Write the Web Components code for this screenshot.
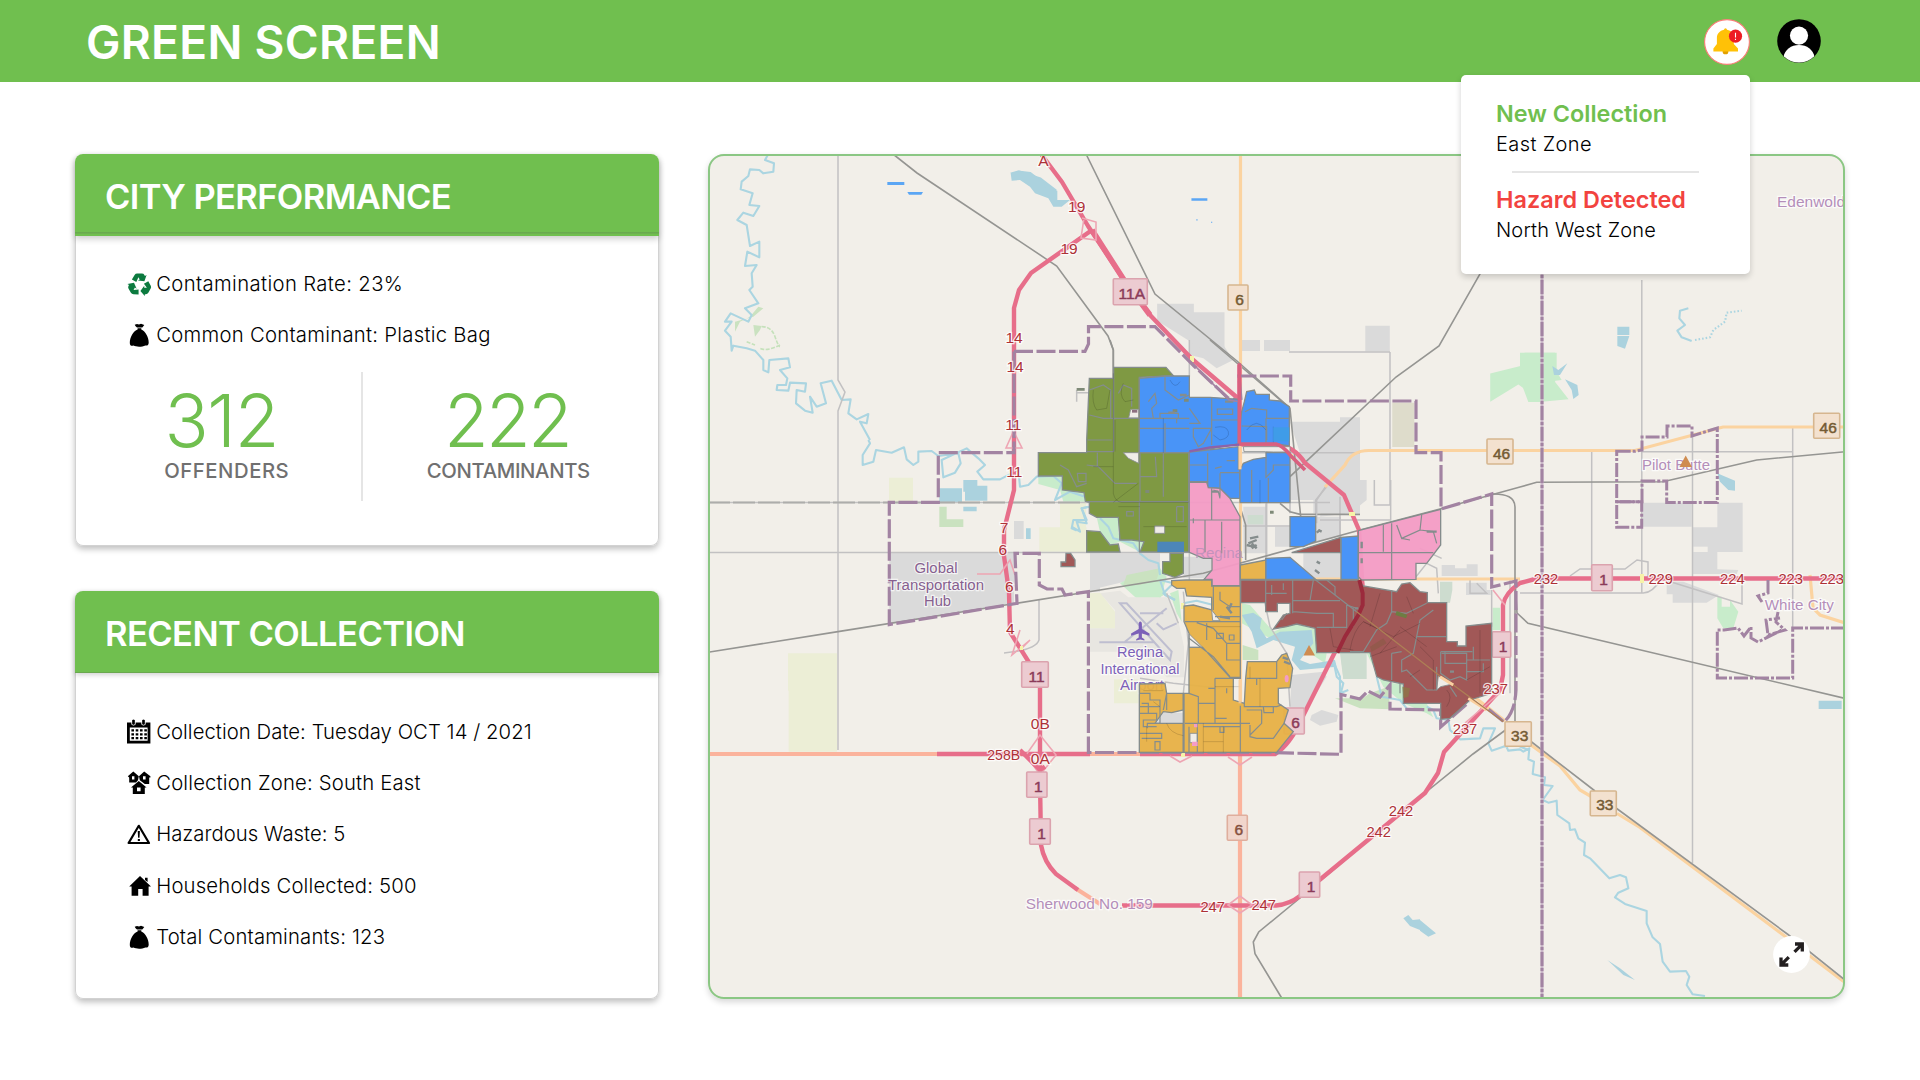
<!DOCTYPE html>
<html lang="en">
<head>
<meta charset="utf-8">
<title>Green Screen</title>
<style>
  html, body { margin: 0; height: 100%; background: #fff; }
  body { font-family: Inter, Roboto, sans-serif; color: #000; overflow: hidden; }
</style>
</head>
<body>
<green-app></green-app>

<script>
const define = (name, html, extra) => {
  const tpl = document.createElement('template');
  tpl.innerHTML = html;
  customElements.define(name, class extends HTMLElement {
    constructor() {
      super();
      this.attachShadow({ mode: 'open' }).append(tpl.content.cloneNode(true));
    }
    connectedCallback() { if (extra) extra.call(this, this.shadowRoot); }
  });
};

/* Single line of text, tracked so that it fills the given measure. */
define('fit-text', `<style>
  :host { display: inline-block; white-space: nowrap; }
  span { display: inline-block; }
</style><span><slot></slot></span>`, function (root) {
  const span = root.querySelector('span');
  const want = parseFloat(this.getAttribute('measure'));
  const n = this.textContent.length;
  if (!want) return;
  span.style.letterSpacing = '0px';
  const ls = (want - span.getBoundingClientRect().width) / n;
  span.style.letterSpacing = ls.toFixed(3) + 'px';
  span.style.marginRight = (-ls).toFixed(3) + 'px';
});

const ICONS = {
  recycle: `<g fill="#0c7a3f">${[0, 120, 240].map(a => `<path transform="rotate(${a} 12.6 13)" d="M4.9 7.4 7.6 3Q8.5 1.600 10.2 1.600H14.900Q16.600 1.600 17.4 3L17.9 3.900 19.6 3 17.4 9.3 10.900 8.6 12.7 7.6 11.4 5.3 9.300 9.900Z"/>`).join('')}</g>`,
  bag: `<path d="M8.6 3.2 7.7 1.8 10 1 12 1.6 14 .8 17.3 2 15.3 4.4H10Z"/><path d="M10.6 5.2H14.3V6.6C18 8 21.7 14 21.7 19.5 21.7 22.6 19.5 22.9 18.4 22.4 15 24 9.5 24 6.4 22.6 4.5 23.2 2.8 22.6 2.8 20 2.8 14 6.6 8 10.6 6.6Z"/>`,
  calendar: `<path fill-rule="evenodd" d="M0 2.5H5V1A1.3 1.3 0 0 1 8 1V2.5H15V1A1.3 1.3 0 0 1 18 1V2.5H23.4V23.4H0ZM2.8 7.6V20.8H20.6V7.6Z"/><path fill="none" stroke="#fff" stroke-width=".8" d="M4.7 1V4.4Q6.5 6 8.3 4.4V1M14.7 1V4.4Q16.5 6 18.3 4.4V1"/><path stroke="#000" stroke-width="2.3" stroke-dasharray="2.6 1.7" d="M4.4 10.4H20M4.4 14.3H20M4.4 18.2H20"/>`,
  zone: `<g fill-rule="evenodd"><path d="M.8 5.200 6.3 .6 11.8 5.2 11 9.300 9 11.6H2.200V6.600ZM5 5.200V8.4H7.4V5.200Z"/><path d="M12 5.200 17.2 .6 23.400 5.200V6.600H22.200V13H17.8L12.8 9.300ZM16 5.200V8.4H18.6V5.200Z"/><path d="M4 16.600 11.8 10.100 19.600 16.600H17.800V23H5.800V16.600ZM10 16.400V20.2H13.600V16.400Z"/></g>`,
  warning: `<path fill="none" stroke="#000" stroke-width="2.2" stroke-linejoin="round" d="M11.8 3.8 22 21H1.6Z"/><path d="M10.7 9H12.9L12.5 15.8H11.1ZM10.8 16.9H12.9V19H10.8Z"/>`,
  house: `<path d="M13 2 24 12.6H21.6V21.8H15.6V15H11.2V21.8H4.6V12.6H2.2L13 2ZM18 3.8H20.6V8L18 6Z"/>`
};
customElements.define('app-icon', class extends HTMLElement {
  constructor() { super(); this.attachShadow({ mode: 'open' }); }
  connectedCallback() {
    this.shadowRoot.innerHTML = `<style>:host{display:block;width:24px;height:24px}svg{display:block;overflow:visible}</style>
      <svg width="24" height="24" viewBox="0 0 24 24">${ICONS[this.getAttribute('name')]}</svg>`;
  }
});

define('info-row', `<style>
  :host { display: flex; align-items: center; height: 51.3px; padding-left: 51px; gap: 5.200px; font-size: 20.3px; font-weight: 300; line-height: 24px; }
</style><slot name="icon"></slot><slot></slot>`);

define('stat-block', `<style>
  :host { display: flex; flex-direction: column; align-items: center; padding-top: 22px; box-sizing: border-box; }
  .n { font-size: 73px; font-weight: 300; line-height: 54px; color: #70bf4f; margin-left: var(--shift, 0); }
  .l { font-size: 20.3px; font-weight: 500; line-height: 20px; margin-top: 13px; color: #707070; }
</style><div class="n"><slot name="value"></slot></div><div class="l"><slot></slot></div>`);

define('stat-pair', `<style>
  :host { display: grid; grid-template-columns: 269px 2px 291px; height: 129px; padding-left: 16px; margin-top: 11.4px; }
  i { background: #e5e5e5; }
</style><slot name="a"></slot><i></i><slot name="b"></slot>`);

define('info-card', `<style>
  :host { display: flex; flex-direction: column; border-radius: 8px; background: #fff; box-shadow: 0 3px 6px rgba(0,0,0,.26); }
  header { height: 82px; box-sizing: border-box; padding: 3px 0 0 30px; display: flex; align-items: center; background: #70bf4f; color: #fff; border-radius: 8px 8px 0 0; font-size: 34.5px; font-weight: 600; position: relative; z-index: 1; }
  :host([ruled]) header { padding-top: 2px; box-shadow: 0 3px 6px rgba(0,0,0,.2); background: linear-gradient(#70bf4f 78px, #67a64e 78px, #6fb551 80px, #70bf4f 80px); }
  :host(:not([ruled])) header { border-bottom: 1px solid #6aa84f; box-shadow: 0 2px 5px rgba(0,0,0,.18); }
  .body { flex: 1; border: 1px solid #d2d2d2; border-top: 0; border-radius: 0 0 8px 8px; padding-top: var(--body-top, 0); }
</style><header><slot name="title"></slot></header><div class="body"><slot></slot></div>`);

define('alert-menu', `<style>
  :host { display: block; box-sizing: border-box; width: 289px; height: 199px; padding: 26px 0 0 35px; background: #fff; border-radius: 5px; box-shadow: 0 3px 6px rgba(0,0,0,.18); }
  h3 { margin: 0; font-size: 23.4px; font-weight: 600; line-height: 26px; }
  p { margin: 5px 0 0; font-size: 20px; font-weight: 300; line-height: 24px; height: 26px; }
  .ok { color: #70bf4f; } .bad { color: #f2433f; }
  hr { width: 187px; height: 2px; border: 0; background: #e5e5e5; margin: 13px 0 14px 16px; }
</style>
<h3 class="ok"><fit-text measure="171">New Collection</fit-text></h3><p><fit-text measure="96">East Zone</fit-text></p>
<hr>
<h3 class="bad"><fit-text measure="190">Hazard Detected</fit-text></h3><p><fit-text measure="160">North West Zone</fit-text></p>`);

define('app-header', `<style>
  :host { display: flex; align-items: center; height: 82px; box-sizing: border-box; padding: 0 99px 0 86px; background: #70bf4f; position: relative; z-index: 5; }
  h1 { margin: 2px auto 0 0; font-size: 46px; font-weight: 600; line-height: 60px; color: #fff; }
  svg { display: block; }
  .bell { margin: 2px 27px 0 0; }
  alert-menu { position: absolute; left: 1461px; top: 75px; }
</style>
<h1><fit-text measure="355">GREEN SCREEN</fit-text></h1>
<svg class="bell" width="46" height="46" viewBox="0 0 46 46"><circle cx="23" cy="23" r="22.4" fill="#fff" stroke="#fb7d78" stroke-width="1.1"/>
<circle cx="21.5" cy="32.4" r="2.9" fill="#e2a000"/>
<path fill="#ffc107" d="M20 10.8Q20.2 9.4 21.5 9.2 22.8 9.4 23 10.8C27.4 11.6 29.8 15 29.8 19V25L34 29.4V32.6H9.4V29.4L12.9 25V19C12.9 15 15.6 11.6 20 10.8Z"/>
<circle cx="31.5" cy="17.2" r="6.6" fill="#ed1c24"/><path stroke="#fff" stroke-width="1.1" d="M31.5 13.8V18.6M31.5 19.8V21"/></svg>
<svg width="44" height="44" viewBox="0 0 44 44"><defs><clipPath id="c"><circle cx="22" cy="22" r="21.6"/></clipPath></defs><circle cx="22" cy="22" r="21.8" fill="#000"/><g clip-path="url(#c)" fill="#fff"><circle cx="22" cy="16.6" r="9.1"/><path d="M6.4 38C8 30.5 14 26 22 26S36 30.5 37.6 38Q31 44 22 44T6.4 38Z"/></g></svg>
<alert-menu></alert-menu>`);

/* ---- map data ---- */
const at = (x, y, body) => `<g transform="translate(${x} ${y}) scale(.33333)">${body}</g>`;
const wide = body => `<g transform="scale(1.2245)">${body}</g>`;
const P = (cls, ...ds) => ds.map(d => `<path class="${cls}" d="${d}"/>`).join('');

const land =
  at(700, 440, P('built', 'M568 338H942V490L568 553Z', 'M942 243H971V297H942ZM1170 338H1200V455H1170Z') + P('farm', 'M567 113H639V187H567ZM1018 262H1160V335H1018ZM264 640H411V935H266V752H264Z') +
    P('wood', 'M718 200H740V238H790V261H718Z') + P('water', 'M718 145H786V187H718ZM790 120H832V137H862V182H795V155H790ZM790 200H830V214H790ZM978 265H992V297H978Z') + P('park', 'M1015 108H1085V150L1150 155 1160 185H1090L1080 150 1015 132Z')) +
  at(1060, 340, P('built', 'M390 0H480L520 60 470 85 430 55 390 45ZM545 0H600V33H545ZM612 0H690V33H612ZM690 245H840V232H900V520H760V480H690V340H720ZM550 500H618V640H550ZM645 560H690V620H645ZM767 530H840V590L767 605ZM90 640H300V700L90 750ZM370 650H455V690L430 715H370ZM730 640H843V718H767L730 690Z') +
    P('wood2', 'M563 525H610V553H563Z') + P('farm', 'M0 487H78V636H0Z') + P('park', 'M110 532H175V580L200 597 252 605 240 636 180 605 150 615 120 575ZM180 730 235 700 300 685 320 710 300 780H235Z')) +
  at(1060, 560, P('airport', 'M90 275V205H165V150L120 100 180 92 205 112H320L350 160 372 260V352H320L300 330 240 275Z') + P('farm', 'M90 100 120 98 165 155V205H90ZM162 358H235V430H162Z') +
    P('park', 'M235 100 240 78 300 75 320 100 300 112ZM330 100 355 90 365 185 350 160Z') + P('wood', 'M190 75 200 45 300 25 290 60 240 75ZM548 255 595 270V300H548Z') +
    P('park', 'M545 130 570 135 640 215 700 190 765 208 775 280 800 280 795 310 750 280 690 235 630 235 545 190Z') +
    P('water', 'M545 165 580 158 605 175 600 205 620 235 660 215 755 210 760 250 720 300 750 312 825 300 830 320 720 330 695 300 705 260 640 240 590 265 575 215Z') +
    P('built', 'M695 345 790 335 800 350 735 455 690 445ZM755 465 785 450 835 465 830 485 780 497 750 480ZM310 458H370V490H290Z') + P('wood2', 'M840 280H900V357H850Z')) +
  at(1220, 480, P('built', 'M330 0H440V60L390 100 300 110 310 50ZM210 0H268V60H210ZM665 255H705V265H740V253H773V288H665ZM738 308H800V330H812V345H738ZM300 230H362V290H260Z') + P('wood2', 'M660 305H697V330L690 368H660ZM362 520H440V597H370Z') +
    P('park', 'M818 383H840V450H818ZM440 520 455 520 470 590 520 610 545 612 560 660 620 670 640 712 620 700 550 670 490 620Z') + P('wood', 'M345 655 400 655 420 660 450 640 505 620 510 688 420 685Z')) +
  wide(P('built', 'M945 248H975V255H1000V287H985L945 262ZM1115 266H1135V287H1115Z') + P('farmd', 'M1137 329H1155V365H1137Z') + P('park', 'M1217 305 1245 298V288H1270V312L1281 326 1259 328 1240 314 1217 328Z') + P('water', 'M825 141 832 139 850 145 863 155 860 160 850 158Z')) +
  at(1520, 280, P('park', 'M0 218H110V275L125 300 60 308V366H25L0 300ZM592 950 605 950V980H630V960L655 995 640 1045H610L592 1015Z') + P('water', 'M292 140H328V165H292ZM292 168H328L315 206 292 198ZM97 258 115 270 142 250 120 285 102 285ZM135 298 172 315 176 345 160 357 155 330ZM592 580 620 592 645 602 645 632 625 630 600 605Z') +
    P('built', 'M368 668H515V740H368ZM592 668H668V816H592V868L655 870 650 882H517V742H592ZM440 905H490L597 945 560 968H458V943H440Z') + P('ground', 'M520 800H563V816H520Z')) +
  at(700, 140, P('water', 'M932 100 960 92 992 96 1030 125 1035 143 1072 152 1072 180 1110 180 1085 200 1060 200 1045 175 1005 160 990 140 960 120 935 122Z') + P('blue', 'M562 126H613V135H562ZM622 156H669L664 164H627Z') +
    P('wood', 'M160 555 185 558 180 570 165 590ZM105 545 160 530 190 505 175 500 150 530 120 545 105 575Z') + P('greendots', 'M185 560 Q215 560 225 590T240 620M240 615 Q200 635 180 625M140 605 165 615')) +
  at(1420, 660, P('water', 'M1196 122H1265V147H1196ZM0 780 48 820 25 830 0 812ZM562 900 600 925 645 960 610 945 575 912Z')) +
  at(960, 700, P('water', 'M1330 655 1345 645 1358 660 1380 658V690L1350 678Z')) +
  wide(P('blue', 'M973 162H986V164H973Z') + `<path class="blue" d="M977 179h1v1h-1zM989 181h1v1h-1z"/>`);

const streams =
  at(700, 140, P('river', 'M205 42 195 60 222 70 220 95 190 100 178 90 150 88 145 108 125 125 122 148 158 160 148 195 178 198 160 228 130 218 112 240 140 255 150 318 178 305 178 352 142 335 135 378 170 375 155 400 158 440 148 450 175 490 135 505 155 525 145 545 92 520 75 545 95 545 75 572 92 590 95 632 100 617 140 625 165 632 190 660 190 690 205 697 208 660 265 655 270 682 240 690 262 715 258 735 232 735 230 750 265 752 270 728 318 730 315 755 290 750 288 790 315 812 338 818 330 770 350 800 378 790 362 730 395 722 425 780 452 778 445 820 470 838 505 822 500 850 480 845 510 900')) +
  at(700, 440, P('river', 'M505 0 510 10 488 45 488 75 520 65 528 30 575 38 612 22 620 58 640 75 655 65 655 35 695 33 715 48 775 40 782 70 765 98 730 112 725 60 800 25 835 55 855 75 832 95 850 118 900 118 955 90 960 140 985 135 1010 110 1060 108 1085 130 1065 180 1110 155 1155 170M1170 200 1145 205 1160 240 1120 240 1115 265 1130 272')) +
  at(1060, 340, P('river', 'M35 560 60 575 50 545 80 550 65 505 85 500M120 535 145 560 160 595 220 610 240 640 265 660 295 670 300 705M300 720 340 730 310 760 345 780')) +
  at(1060, 560, P('river', 'M300 60 315 105 345 120M370 130 410 122 460 135M820 300 830 350 850 370 840 410')) +
  at(1220, 480, P('river', 'M340 545 360 590 360 640 385 630M470 590 485 650 540 660 560 685M620 680 640 690 650 715 685 720 690 750 720 778 780 775 790 745 825 745 805 790 815 812 850 800 890 795 925 810')) +
  at(1420, 660, P('river', 'M260 262 265 272 300 268 310 275 328 265 325 298 342 305 338 342 375 352 372 375 398 378 368 420 385 428 410 422 412 465 448 490 450 510 465 508 475 535 495 548 492 585 510 595 568 655 600 645 618 652 625 685 595 698 585 712 615 732 680 753 680 790 698 832 720 852 728 905 750 935 798 933 808 950 800 975 818 1003 855 1008')) +
  at(1520, 280, P('river', 'M505 85 480 92 478 115 495 135 472 152 485 172 515 183') + P('river dots', 'M525 180 570 172 580 150 615 125 620 98 665 92'));

const roads =
  P('minor', 'M838 154V380L845 392 838 411V750', 'M708 552.6H1210', 'M1641.8 280V593', 'M1692.5 437V863', 'M1591.7 452V575', 'M1792.7 428V628', 'M1390 352V480M1289 352H1390', 'M708 502.5H1330', 'M1039 621V640Q1036 650 1004 653M1039 600V628', 'M1642 451.7H1793', 'M1520 593H1642Q1652 594 1662 578M1570 576 1580 569H1625L1637 560 1648 562V578', 'M1668 581 1742 604V575') +
  at(1060, 340, P('minor', 'M50 150V185M50 158H88M0 338H900M388 110V0M388 490 V720M618 490V660M767 530V480L800 440M840 470V590M690 380V520M550 558H690') + P('rail', 'M150 0 160 30V460Q165 485 185 487H380M160 487 235 430 238 338M450 0 690 205 730 610M660 490 690 515 720 523H900M180 600V560L235 440', 'M540 500 557 555V660')) +
  at(1060, 560, P('minor', 'M370 95 385 250 370 400V577M320 100 355 190M600 60 630 200 680 280 690 440M240 355 340 370 480 385M540 0V577') + P('runway', 'M180 130 330 300 335 275 200 130ZM118 247H285M195 245 320 145M240 160H310M290 190 310 208 350 190')) +
  at(1220, 480, P('minor', 'M290 130V60L330 0M463 0V75H510V0M360 110V220M140 60V230M300 120H512V0M588 290 620 250 650 265 655 340M870 300V640M750 300V340H800L770 310M600 205 665 235M815 330V440')) +
  P('dashline', 'M708 502.5H1080') +
  P('second', 'M1240.5 154V760', 'M1240 579H1520', 'M1845 427H1723L1635 450.5H1370Q1352 450 1345 465L1325 487', 'M1810 575 1813 608 1820 615 1845 623', 'M1440 670 1505 721', 'M1531 745 1560 766 1580 790 1592 797', 'M1617 813.500 1640 827.500 1788 938.500M1808 954.500 1845 982.500') +
  P('trunk', 'M708 754H1240', 'M1240 754V998', 'M1075 888 1100 904') +
  P('rail', 'M708 652.3 838 631.6 1100 590 1203.3 573.3 1360 530 1440 509 1520 487 1536.7 482.3 1663 481.7 1756.7 460 1845 451.7',
    'M893 154 917 173 1046.7 259.3 1056.7 266 1108 336 1113.3 350V500', 'M1086 154 1155 294 1237 361 1290 408', 'M1539 154 1480 274 1439 346 1396 377 1290 476.700',
    'M1491 494Q1515 493 1515 507V723L1473 754 1420 797', 'M1515 580 1517 613 1528 623.3 1845 698.4', 'M1531 741.500 1595 791M1616 808 1788 934.500 1845 980',
    'M1420 797 1300 898 1258.7 932 1253.3 942 1255 953.7 1281.7 998') +
  P('major', 'M937 754H1090M1140 754H1275Q1290 745 1302 718L1352 618Q1365 600 1362 580L1359 530 1344 495 1305 463Q1294 446 1276 444.5H1240',
    'M1041 154 1062 182 1088 226 1124 280 1150 315 1192 359 1240 400', 'M1239.5 365V442', 'M1092 230 1031 273 1019 290 1014 308V490L1004 530V556L1009 592 1010 632 1040 680V780L1041 845Q1044 862 1056 874L1078 890M1122 905.5H1276Q1290 904 1300 896L1425 793 1438 773 1444 752 1500 690 1503 675V605Q1505 593 1520 583L1537 578.5H1845') +
  P('bigmajor', 'M1092 230 1124 280 1150 315') +
  P('ramp', 'M1082 218 1096 222 1096 240 1081 238 1084 218M1014 430 1006 448 1022 448 1014 432M977 574H1000L1010 560 1015 575M1020 630 1012 655 1030 640 1020 650M1026 755 1040 735 1056 755 1040 775ZM1170 756 1180 762 1192 756M1228 757 1240 765 1252 757M1228 905 1240 913 1252 905 1240 896ZM1493 590 1505 605M1465 723 1500 693') +
  at(960, 700, P('major', 'M180 150 240 210 255 200')) +
  `<g fill="#f7f3a8"><path d="M1190 356h4v6h-4zM1289 454h4v6h-4zM1349 512h6v4h-6zM1181 603h3v6h-3zM1181 751h4v6h-4zM1640 574h4v9h-4zM1020 646h3v4h-3z"/></g>`;

const bounds =
  P('bound', 'M1014 351.4H1085L1088.5 344V326.6H1155L1194 366 1228 398 1240 401', 'M1014 351.4V452.7H938.3V502.4H889.3V624.6L1017 603.4 1015 553.3H1039.3V585L1047 589H1062L1065 595 1088.4 591.6V752.5H1266.7L1341 754.3V694.5L1360 699 1368 691 1380 697 1390 685V709L1440.7 710V727L1469 702',
    'M1241 400 1239 376H1290.7V401H1416V452.7H1441V509L1491.7 494V587L1516 581V690Q1515 712 1504 722L1486 707') +
  P('bound2 soft', 'M1542 154V998') + P('bound2', 'M1542 154V998', 'M1616.7 451.3H1635L1642 450V437H1667V426H1692V436L1717.3 428V502.5H1666.7V481H1642V501.700H1616.7Z', 'M1616.7 501.7H1641.7V527.3H1616.7Z', 'M1768 580V593L1758 596 1762 602M1778 612 1776 622 1785 630 1768 635 1766 620 1780 618M1845 628H1792.7V678H1717.3V630H1724L1738 628 1744 636 1751 627V638L1758 642 1782 630');

const shields = [
  [1113.3, 278.7, 34, 26, '11A', 'r'], [1021.7, 661.7, 26.6, 25.6, '11', 'r'], [1026.7, 772, 20.3, 25.3, '1', 'r'], [1029.7, 818.7, 20.6, 25.6, '1', 'r'],
  [1227.3, 815.3, 20, 25, '6', 't'], [1299.3, 872, 20.4, 25.3, '1', 'r'], [1228, 285, 20, 25, '6', 'o'], [1487, 439, 26, 25, '46', 'o'],
  [1813.7, 413.3, 26, 25, '46', 'o'], [1591.7, 564.7, 20.6, 26, '1', 'r'], [1492.3, 631.7, 18.4, 25.6, '1', 'r'], [1284, 708, 20.3, 26, '6', 'r'],
  [1505, 721.7, 26.3, 24.6, '33', 'o'], [1590.3, 791, 26, 24.7, '33', 'o']
].map(([x, y, w, h, t, k]) => `<rect class="s${k}" x="${x}" y="${y}" width="${w}" height="${h}" rx="1"/><text class="t${k}" x="${x + w / 2 + 1.5}" y="${y + h / 2 + 7}">${t}</text>`).join('');

const exits = [
  [1043.3, 166, 'A'], [1076.7, 211.5, '19'], [1069, 253.5, '19'], [1014, 343, '14'], [1015, 371.7, '14'], [1013.3, 429.5, '11'], [1014.3, 476.7, '11'],
  [1004, 532.5, '7'], [1002.7, 554.7, '6'], [1009.3, 592, '6'], [1010.3, 633.5, '4'], [1040.3, 728.7, '0B'], [1003.7, 760.3, '258B'], [1040.3, 763.7, '0A'],
  [1546, 583.5, '232'], [1660.7, 583.5, '229'], [1732.3, 583.5, '224'], [1790.7, 583.5, '223'], [1831.7, 583.5, '223'],
  [1495.7, 694, '237'], [1465, 733.5, '237'], [1401, 816, '242'], [1378.7, 836.5, '242'], [1212.7, 911.7, '247'], [1263.7, 910.3, '247']
].map(([x, y, t]) => `<text class="exit" x="${x}" y="${y}"${t.length > 2 ? ` textLength="${t.length * 8.2}" lengthAdjust="spacingAndGlyphs"` : ''}>${t}</text>`).join('');

const place = ([x, y, t, w, c]) => `<text class="${c}" x="${x}" y="${y}" textLength="${w}" lengthAdjust="spacingAndGlyphs">${t}</text>`;
const places = [
  [1089.3, 909, 'Sherwood No. 159', 127, 'pl'], [1811, 206.7, 'Edenwold', 68, 'pl'], [1676, 470, 'Pilot Butte', 68, 'pl'], [1799.3, 610, 'White City', 69, 'pl'],
  [936, 573.3, 'Global', 43, 'hub'], [936, 589.7, 'Transportation', 96, 'hub'], [937.5, 605.7, 'Hub', 27, 'hub'],
  [1140, 657.3, 'Regina', 46, 'air'], [1140, 674, 'International', 79, 'air'], [1142, 690.3, 'Airport', 44, 'air']
].map(place).join('');

const zones =
  at(1060, 340,
    P('z olive', 'M-65 338H80V300L88 115H161V82H318L340 107 238 112V338H386V636H240L252 605 215 600 180 600 175 532H110L88 520V487L76 484 72 458 7 450V408H-65Z', 'M80 572 120 575 150 615 175 612 180 636H80Z', 'M330 640H370V700L345 712 308 700V665H330Z') +
    P('z azure', 'M238 115 318 108H388V172H450L535 178V312L388 338H238Z', 'M388 336 535 320V388H540V475H510L480 445 443 443V425H388Z', 'M545 215 553 185 560 155 583 150 588 163H628V180L660 183 688 200V318L650 312H540V260Z', 'M618 338H690V488H540V390L550 370 580 358 618 352Z', 'M690 530H767V603L730 620H690Z', 'M843 592 895 588V718H843Z', 'M617 655 690 652 767 718H617Z') + P('azuresoft', 'M292 605H372V636H292Z') +
    P('z rose', 'M388 427H440L445 443 480 445 510 475 540 530V737H456V718H432L456 690V655H430L388 637Z') +
    P('z amber', 'M541 675 617 660V718H541Z') +
    P('hole', 'M212 208H236V234H206ZM190 338H236V370L205 355ZM284 558H314V580H284ZM550 320H690V336H640L616 335H552Z') +
    P('lot', 'M88 150 130 135 152 150V235H238M161 115V235H238M88 225 130 235H161M83 300H155M161 235V335H80M175 160 190 135 215 145V200M80 375 115 380 165 430H230M0 375 25 390 50 440 80 430M52 400H78V425H55ZM80 485H386M240 340V487M286 350 290 410 240 410M310 338V470M238 487V636M200 515 220 515V528H200ZM350 500H370V545H350V500M112 338V380M238 235H388M315 112V150L355 180 388 165M265 185 285 160 290 190 275 205 280 235M238 265H388M315 250V338M350 250V235M300 220H355V235H300ZM388 205 420 250H388M455 175V315M400 290 415 320 430 310 455 265 400 265ZM455 240H535M472 207H518V223H472ZM388 375H443M443 340V425M480 400V470M480 398H540M575 390V488M618 352V412L640 390V375H690M555 215 575 205 620 210V235H690M545 258 620 260V300M500 362H525M465 385 485 380M618 235V312M388 540H540M455 445V540M400 535V550M435 540V637M485 545V640M460 450 475 455 480 475M625 414V488') +
    P('thin', 'M100 150Q95 190 110 210L140 205 150 150M190 130Q175 165 195 185L220 180M165 240V335M100 380H160M175 500H240M250 560H380M310 235V338M330 120Q345 150 360 125M465 262Q500 255 505 275T480 300L460 285M560 270Q590 230 618 270M600 490V420M640 260V310M160 100V460Q165 485 185 487H386M160 487 235 430') +
    `<path d="M640 262h48v42h-48z" fill="#3f9ce8"/><path d="M372 176h14v9h-14zM338 208h14v9h-14zM256 450h12v9h-12zM50 144h24v8h-24zM630 512h11v9h-11z" fill="#7f8a78"/><path d="M216 210h16v8h-16z" fill="#8d6f80"/><path class="lot dense" d="M570 595 595 590M575 610 590 625M560 615 580 620M775 570 785 575M770 665 780 670M765 690 778 700M455 455h20M495 185h25M360 165h20M325 218h20"/>
    <path class="over orange" d="M540 318V388"/><path class="over pink" d="M538 70V312H648Q670 318 690 345L735 390"/><path class="over pinkthin" d="M388 334 450 322 538 314"/>`) +
  at(700, 440, P('z brick', 'M1098 340H1112L1125 360V380H1083V366H1097Z')) +
  at(1060, 560,
    P('z amber', 'M335 62 378 60H455V78H541V355H520V420L553 430 557 355 562 305H650L665 285 680 280 698 325 690 383 655 385V430L685 450 672 490 700 515 650 577H372V400H387V220L372 185V138L400 135 455 150V112L380 108 375 85H350L335 75Z', 'M238 372 315 370 320 400H370V450L335 458 310 455 285 490H370V577H238Z') +
    P('hole', 'M388 222 428 262H388ZM390 520H412V548H390ZM455 150 480 182H458Z') +
    P('lot', 'M387 262H428L510 352H541M375 185H541M410 188 460 205 500 250H541M440 190V240M460 78V150M480 95V120L510 140H541M500 250V300H541M470 220H490V235H470ZM508 225H522V240H508ZM465 170H541M387 235 460 290M460 290 510 350M465 355V490M465 355H520M387 400 415 410V430H465M415 430V490M375 490H570M412 490V577M445 385H465V425M553 430V440H650L665 435M560 355H650V305M590 355V375M480 500H492V517H480ZM570 495V530L590 535H640L672 490M570 525 605 490V450H560M610 440H640V458H612ZM430 500H541M541 437V577M320 400 310 450M240 400H270V420H300V440H240M240 460H290V480H250V500H290M240 520H305V535H245M262 505V490H300L300 440M285 570V545H300V570ZM320 450V400M245 430H265V460M465 475H500M500 385V400M387 577V500M370 400V577') +
    P('thin', 'M430 490V577M490 500V577M430 545H490M600 355V440M320 490Q330 520 370 527M300 440 280 425M440 200H541M465 380H541M570 320V355M260 545V500M250 392H310') +
    `<g fill="#f49cc6"><path d="M402 492h10v10h-10zM396 545h17v13h-17z"/><ellipse cx="680" cy="356" rx="6" ry="11"/></g><path class="lot dense" d="M668 292 685 298M672 305 690 312M500 140 515 160M515 130 505 150M480 170 510 175"/><path class="over orange" d="M540 360V430" opacity=".8"/>`) +
  at(1220, 480,
    P('z rose', 'M415 152 662 88V195L620 250H588V298L425 300 415 290Z') +
    P('z brick', 'M62 300H415L430 318 530 335 545 312 570 308 600 335 622 338V368H680V485H712V498H738V438L815 430V640L750 660 690 715 662 718V670H550V612L490 600 470 590 450 518H290L285 445 230 432 200 440 160 447 190 405 210 400V370H172V395H137V368H62Z', 'M215 218 362 172V218Z') +
    P('hole', 'M655 588 698 612 662 620 650 630Z') +
    P('lot', 'M490 135V215M515 130V298M415 218H640M530 135 545 175 600 150 605 105M600 150 640 155 650 190M545 175 570 180M137 300V368M218 300V400M137 340H200M218 362H360M270 362 280 300M345 345V320L320 300M218 395 290 400H340V440M380 375V445M290 442H380M380 375 410 385M390 515H430L470 450 500 430 515 395 560 400M515 330V395M560 400 620 370M590 470 600 420 640 390M590 470 580 520 545 540V575L560 570 620 630H650V560M590 470H680M515 520V600M515 520 545 515M662 515V580L690 600 720 590 740 600V520H665M675 515V550H740M740 540H810M760 500V540M740 575H790V550M690 620 710 650M662 515H757M540 610V640M400 385V440M155 315V345M190 310V330M200 400 185 420') +
    P('thin', 'M390 510Q400 450 430 425L480 450M430 425 520 470 600 430M480 340 450 440M540 440 620 500M480 520 540 450M560 350 580 400M600 500 640 540V630M570 590 600 570M680 630Q700 650 680 680M780 450V640M740 600 810 560M450 530 530 500M330 445 340 500 400 510') +
    `<path d="M530 393 562 405 558 415 526 405z" fill="#6d7d42"/><path d="M450 500 490 475 500 490 455 515z" fill="#8a5a44" opacity=".6"/><path class="over crimson" d="M418 300 428 340 428 375 415 405 375 470 352 518"/><path d="M280 295 410 395" class="lot"/><path class="over tan" d="M410 395 660 588"/><path class="over orange" d="M660 590 700 615M745 655 800 690"/><path class="over tan" d="M700 615 850 725"/><path class="lot dense" d="M425 185V205M425 235V250M620 155H650M85 190 110 180M95 205 110 195M300 150 290 158M690 575h12M405 385h10"/><path d="M547 620 570 625 565 650 550 655z" fill="#8c7a45" opacity=".7"/>`) +
  P('bound thin2', 'M1190 361 1229 400 1240 402');

define('zone-map', `<style>
  :host { display: block; position: relative; box-sizing: border-box; width: 1137px; height: 845px; border-radius: 16px; box-shadow: 0 3px 6px rgba(0,0,0,.16); }
  .frame { position: absolute; inset: 0; border: 2px solid #8bc784; border-radius: 16px; }
  svg.map { display: block; border-radius: 16px; background: #f2efe9; }
  path { vector-effect: non-scaling-stroke; }
  .built { fill: #dadada; } .farm { fill: #eceed6; } .farmd { fill: #dedccb; } .wood { fill: #cae2c0; } .wood2 { fill: #cddccf; } .park { fill: #c8eccb; } .airport { fill: #e8e6e1; }
  .water { fill: #abd2de; } .blue { fill: #5ba6f4; } .ground { fill: #f2efe9; }
  .greendots { fill: none; stroke: #c5e1bb; stroke-width: 1.6; stroke-dasharray: 4 1.5; }
  .river, .minor, .rail, .second, .trunk, .major, .bigmajor, .ramp, .bound, .bound2, .runway, .lot, .thin, .dashline, .over { fill: none; }
  .river { stroke: #abd5e1; stroke-width: 2.1; stroke-linejoin: round; } .dots { stroke-dasharray: 1.6 2; }
  .minor { stroke: #c2c1c2; stroke-width: 1.5; } .rail { stroke: #959592; stroke-width: 1.6; } .dashline { stroke: #adadab; stroke-width: 2; stroke-dasharray: 22 3; }
  .second { stroke: #fbd3a0; stroke-width: 3.2; } .trunk { stroke: #fbb39c; stroke-width: 4.2; } .major { stroke: #e76e8a; stroke-width: 4.4; stroke-linejoin: round; } .bigmajor { stroke: #e76e8a; stroke-width: 5.6; }
  .ramp { stroke: #eea5b3; stroke-width: 1.6; } .runway { stroke: #bebed0; stroke-width: 2; }
  .bound { stroke: #a283a2; stroke-width: 3.2; stroke-dasharray: 19 3.5; } .bound2 { stroke: #a283a2; stroke-width: 3; stroke-dasharray: 14 2 3 2; } .soft { stroke: #c9b5c8; stroke-dasharray: none; } .thin2 { stroke-width: 1.6; }
  .z { stroke: #848c8c; stroke-width: 1.3; } .olive { fill: #7f9943; } .azure { fill: #4994f7; } .azuresoft { fill: #4c86b8; } .rose { fill: #f39bc5; fill-opacity: .95; } .amber { fill: #e7b044; fill-opacity: .94; } .brick { fill: #a15857; }
  .hole { fill: #f0ede8; stroke: #8a8f8f; stroke-width: .9; } .lot { stroke: #858d8d; stroke-width: 1.2; } .dense { stroke-width: 2.4; } .thin { stroke: #000; stroke-opacity: .16; stroke-width: .9; }
  .over.pink { stroke: #d9607f; stroke-width: 3.6; } .over.pinkthin { stroke: #8e62a8; stroke-width: 2.2; } .over.orange { stroke: #fbd0a0; stroke-width: 3; } .over.crimson { stroke: #9b2a3c; stroke-width: 4; } .over.tan { stroke: #ad7f55; stroke-width: 1.3; }
  text { font: 15.5px "Liberation Sans", Arial, sans-serif; text-anchor: middle; paint-order: stroke; }
  .exit { fill: #ad3137; stroke: #fff; stroke-opacity: .8; stroke-width: 2.4px; }
  .pl { fill: #b48eb9; stroke: #fff; stroke-opacity: .75; stroke-width: 2.4px; } .hub { fill: #86608f; stroke: #fff; stroke-opacity: .7; stroke-width: 2.4px; } .air { fill: #7c60b8; stroke: #fff; stroke-opacity: .7; stroke-width: 2.4px; } .city { fill: #b48eb9; fill-opacity: .75; }
  .sr { fill: #eccbd1; stroke: #dba3ae; stroke-width: 1.6; } .so { fill: #f3e1cf; stroke: #d6b68f; stroke-width: 1.6; } .st { fill: #f1d6cc; stroke: #dfae9d; stroke-width: 1.6; }
  .tr { fill: #8b3b59; stroke: #8b3b59; stroke-width: .5px; } .to { fill: #745b34; stroke: #745b34; stroke-width: .5px; } .tt { fill: #86503f; stroke: #86503f; stroke-width: .5px; }
  .expand { position: absolute; left: 1065px; top: 782px; }
</style>
<svg class="map" width="1137" height="845" viewBox="708 154 1137 845">
  ${land}${streams}${roads}${bounds}
  ${shields}${places}
  <path fill="#7c60b8" d="M1140.300 621.500q1.600 0 1.600 3v4.500l7.600 4.600v2.200l-7.600-2.200v4l2.500 1.600v1.300l-4.100-1-4.100 1v-1.300l2.500-1.600v-4l-7.600 2.200v-2.200l7.600-4.600v-4.500q0-3 1.600-3z"/>
  ${zones}${exits}${place([1219, 558, 'Regina', 48, 'city'])}
  <path fill="#cf8c50" d="M1685.700 455.500 1692 467H1679.500ZM1309 645 1315 655.500H1303.500Z"/>
</svg>
<div class="frame"></div>
<svg class="expand" width="37" height="37" viewBox="0 0 37 37"><circle cx="18.500" cy="18.500" r="18.400" fill="#fff"/><path d="M22 8H29.300V15.500M29 8.300 21.500 15.800M8 21.500V29H15.300M8.300 28.700 15.800 21.200" fill="none" stroke="#231f20" stroke-width="3.300"/></svg>`);

define('green-app', `<style>
  :host { display: block; width: 1920px; height: 1080px; background: #fff; }
  main { display: flex; gap: 49px; padding: 72px 0 0 75px; }
  .side { display: flex; flex-direction: column; gap: 45px; width: 584px; }
  .perf { height: 392px; --body-top: 22px; }
  .recent { height: 408px; --body-top: 33px; }
  .left { --shift: -9px; }
</style>
<app-header></app-header>
<main>
  <div class="side">
    <info-card class="perf" ruled>
      <fit-text slot="title" measure="346">CITY PERFORMANCE</fit-text>
      <info-row><app-icon slot="icon" name="recycle"></app-icon><fit-text measure="247">Contamination Rate: 23%</fit-text></info-row>
      <info-row><app-icon slot="icon" name="bag"></app-icon><fit-text measure="334.500">Common Contaminant: Plastic Bag</fit-text></info-row>
      <stat-pair>
        <stat-block slot="a" class="left"><fit-text slot="value" measure="114">312</fit-text><fit-text measure="125">OFFENDERS</fit-text></stat-block>
        <stat-block slot="b"><fit-text slot="value" measure="126">222</fit-text><fit-text measure="163">CONTAMINANTS</fit-text></stat-block>
      </stat-pair>
    </info-card>
    <info-card class="recent">
      <fit-text slot="title" measure="360">RECENT COLLECTION</fit-text>
      <info-row><app-icon slot="icon" name="calendar"></app-icon><fit-text measure="375.500">Collection Date: Tuesday OCT 14 / 2021</fit-text></info-row>
      <info-row><app-icon slot="icon" name="zone"></app-icon><fit-text measure="264.500">Collection Zone: South East</fit-text></info-row>
      <info-row><app-icon slot="icon" name="warning"></app-icon><fit-text measure="189">Hazardous Waste: 5</fit-text></info-row>
      <info-row><app-icon slot="icon" name="house"></app-icon><fit-text measure="260.500">Households Collected: 500</fit-text></info-row>
      <info-row><app-icon slot="icon" name="bag"></app-icon><fit-text measure="229">Total Contaminants: 123</fit-text></info-row>
    </info-card>
  </div>
  <zone-map></zone-map>
</main>`);
</script>
</body>
</html>
